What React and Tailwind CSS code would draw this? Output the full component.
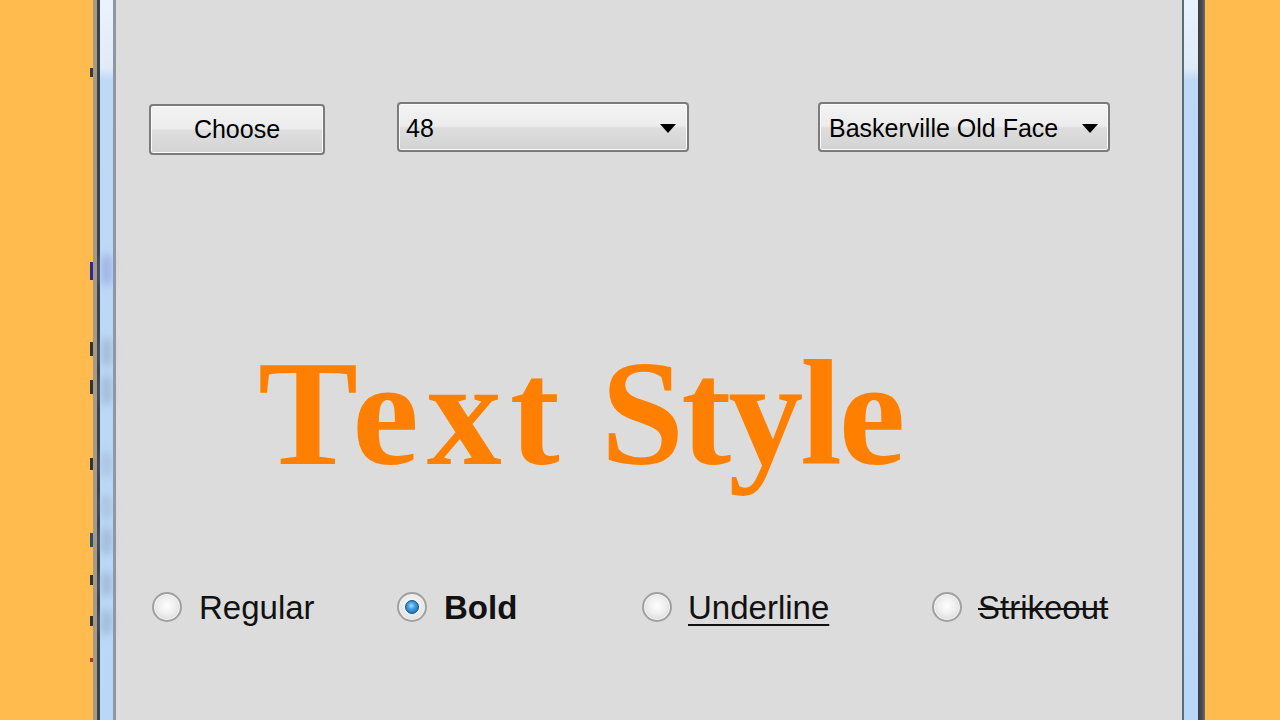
import React from "react";

function Arrow() {
  return (
    <svg width="16" height="9" viewBox="0 0 16 9" className="shrink-0">
      <path d="M0 0 H16 L8 9 Z" fill="#000" />
    </svg>
  );
}

function Radio({ checked }) {
  return (
    <span className="w-[30px] h-[30px] rounded-full border-2 border-[#a0a0a0] shadow-[inset_0_0_0_1px_#f4f4f4] bg-[radial-gradient(circle_at_50%_45%,#ffffff_0%,#eeeeee_45%,#cfcfcf_100%)] flex items-center justify-center shrink-0">
      {checked && (
        <span className="w-[14px] h-[14px] rounded-full border border-[#1d4f7e] bg-[radial-gradient(circle_at_45%_40%,#a6dcff_0%,#3a9be0_40%,#15609f_100%)]" />
      )}
    </span>
  );
}

const ctrl =
  "border-2 border-[#7b7b7b] rounded-[4px] shadow-[inset_0_0_0_1px_#fbfbfb] bg-[linear-gradient(to_bottom,#f3f3f3_0%,#ececec_48%,#dedede_52%,#d3d3d3_100%)] font-['Liberation_Sans',Arial,sans-serif] text-[25px] text-black";

export default function App() {
  return (
    <div className="w-[1280px] h-[720px] flex bg-[#ffbb4d] overflow-hidden">
      {/* left background fragment */}
      <div className="w-[93px] h-full relative">
        <span className="absolute left-[90px] top-[68px] w-[3px] h-[9px] bg-[#3a3a3a]" />
        <span className="absolute left-[90px] top-[262px] w-[3px] h-[18px] bg-[#2a2aa0]" />
        <span className="absolute left-[90px] top-[342px] w-[3px] h-[14px] bg-[#333]" />
        <span className="absolute left-[90px] top-[380px] w-[3px] h-[14px] bg-[#333]" />
        <span className="absolute left-[90px] top-[458px] w-[3px] h-[12px] bg-[#333]" />
        <span className="absolute left-[90px] top-[533px] w-[3px] h-[14px] bg-[#2e4d6e]" />
        <span className="absolute left-[90px] top-[575px] w-[3px] h-[10px] bg-[#333]" />
        <span className="absolute left-[90px] top-[616px] w-[3px] h-[10px] bg-[#333]" />
        <span className="absolute left-[90px] top-[658px] w-[3px] h-[4px] bg-[#b0302a]" />
      </div>
      <div className="w-[4px] h-full bg-[#a39b86]" />
      <div className="w-[3px] h-full bg-[#3b4049]" />
      <div className="w-[13px] h-full relative bg-[linear-gradient(to_bottom,#eaf3fd_0px,#dfebf7_68px,#bdd9f6_80px,#b9d7f7_100%)]">
        <span className="absolute left-[2px] top-[255px] w-[9px] h-[30px] rounded-full bg-[#8b9ad8] blur-[4px] opacity-70" />
        <span className="absolute left-[2px] top-[338px] w-[9px] h-[28px] rounded-full bg-[#8aa0bc] blur-[4px] opacity-60" />
        <span className="absolute left-[2px] top-[376px] w-[9px] h-[28px] rounded-full bg-[#8aa0bc] blur-[4px] opacity-60" />
        <span className="absolute left-[2px] top-[452px] w-[9px] h-[24px] rounded-full bg-[#94a9c2] blur-[4px] opacity-50" />
        <span className="absolute left-[2px] top-[495px] w-[9px] h-[24px] rounded-full bg-[#94a9c2] blur-[4px] opacity-50" />
        <span className="absolute left-[2px] top-[528px] w-[9px] h-[26px] rounded-full bg-[#8aa0bc] blur-[4px] opacity-60" />
        <span className="absolute left-[2px] top-[572px] w-[9px] h-[24px] rounded-full bg-[#8aa0bc] blur-[4px] opacity-60" />
        <span className="absolute left-[2px] top-[610px] w-[9px] h-[24px] rounded-full bg-[#8aa0bc] blur-[4px] opacity-60" />
      </div>
      <div className="w-[3px] h-full bg-[#8e98a4]" />

      {/* client area */}
      <main className="w-[1066px] h-full bg-[#dcdcdc] flex flex-col pt-[102px]">
        <div className="flex items-start h-[53px]">
          <button className={`${ctrl} ml-[33px] mt-[2px] w-[176px] h-[51px] flex items-center justify-center`}>
            Choose
          </button>
          <div className={`${ctrl} ml-[72px] w-[292px] h-[50px] flex items-center justify-between pl-[7px] pr-[11px] pt-[3px]`}>
            <span>48</span>
            <Arrow />
          </div>
          <div className={`${ctrl} ml-[129px] w-[292px] h-[50px] flex items-center justify-between pl-[9px] pr-[10px] pt-[3px]`}>
            <span>Baskerville Old Face</span>
            <Arrow />
          </div>
        </div>

        <div className="ml-[142px] mt-[183px] h-[150px] flex text-[150px] leading-none font-bold text-[#ff8000] font-['Liberation_Serif','Times_New_Roman',serif] whitespace-nowrap">
          <span className="tracking-[8px]">Text</span>
          <span className="ml-[33px] tracking-[-3px]">Style</span>
        </div>

        <div className="mt-[99px] h-[40px] flex items-center pl-[36px] font-['Liberation_Sans',Arial,sans-serif] text-[33px] leading-none text-[#111]">
          <div className="w-[245px] flex items-center gap-[17px]">
            <Radio />
            <span>Regular</span>
          </div>
          <div className="w-[245px] flex items-center gap-[17px]">
            <Radio checked />
            <span className="font-bold">Bold</span>
          </div>
          <div className="w-[290px] flex items-center gap-[16px]">
            <Radio />
            <span className="underline decoration-2 underline-offset-[5px]">Underline</span>
          </div>
          <div className="flex items-center gap-[16px]">
            <Radio />
            <span className="line-through decoration-2">Strikeout</span>
          </div>
        </div>
      </main>

      <div className="w-[2px] h-full bg-[#5f6a76]" />
      <div className="w-[14px] h-full bg-[linear-gradient(to_bottom,#eaf3fd_0px,#dfebf7_68px,#bdd9f6_80px,#b9d7f7_100%)]" />
      <div className="w-[7px] h-full bg-[linear-gradient(to_right,#3a3e44,#4a4d52_60%,#707070)]" />
      <div className="flex-1 h-full" />
    </div>
  );
}
